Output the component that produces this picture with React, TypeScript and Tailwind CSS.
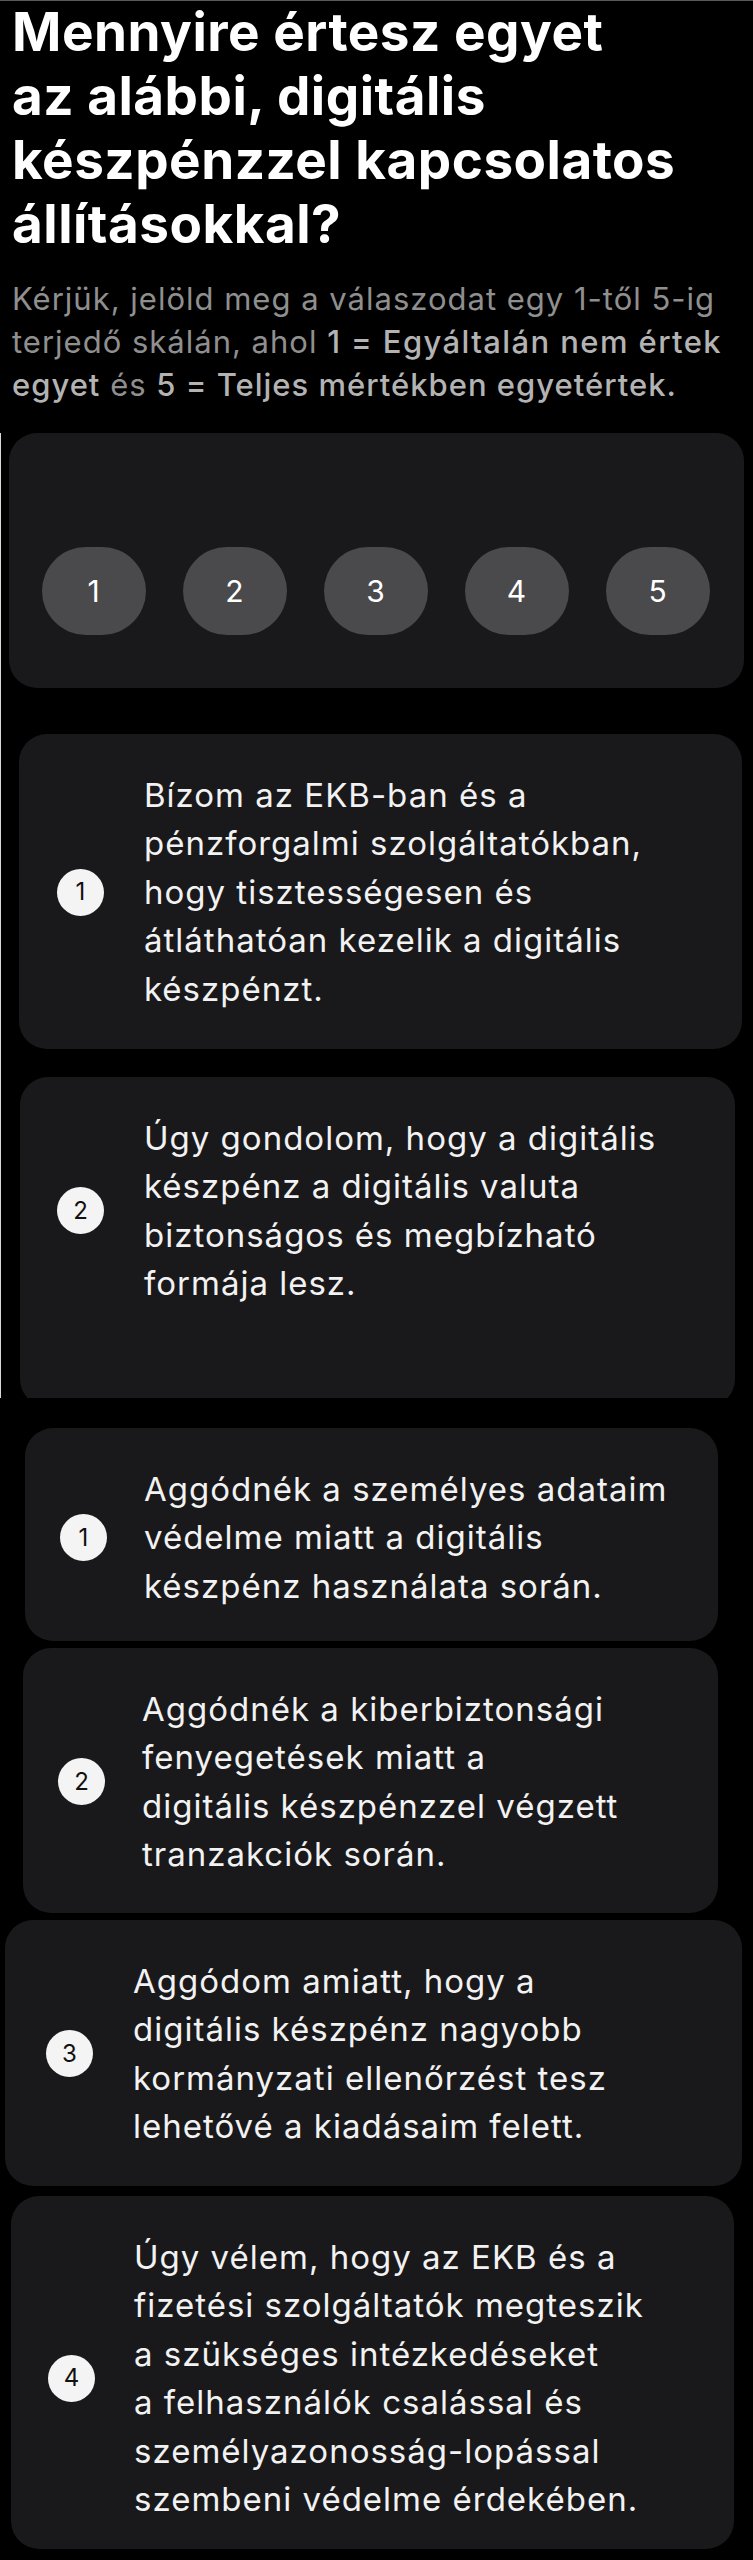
import React from "react";

type Statement = {
  n: number;
  lines: string[];
  card: string;
  badge: string;
};

const statements: Statement[] = [
  {
    n: 1,
    lines: [
      "Bízom az EKB-ban és a",
      "pénzforgalmi szolgáltatókban,",
      "hogy tisztességesen és",
      "átláthatóan kezelik a digitális",
      "készpénzt.",
    ],
    card: "mt-[46px] ml-[18px] w-[723px] h-[315px] pl-[38px]",
    badge: "mr-[40px]",
  },
  {
    n: 2,
    lines: [
      "Úgy gondolom, hogy a digitális",
      "készpénz a digitális valuta",
      "biztonságos és megbízható",
      "formája lesz.",
    ],
    card: "mt-[28px] ml-[19px] w-[715px] h-[330px] pl-[37px]",
    badge: "mr-[40px]",
  },
];

const statementsB: Statement[] = [
  {
    n: 1,
    lines: [
      "Aggódnék a személyes adataim",
      "védelme miatt a digitális",
      "készpénz használata során.",
    ],
    card: "mt-[30px] ml-[25px] w-[693px] h-[213px] pl-[35px]",
    badge: "mr-[37px]",
  },
  {
    n: 2,
    lines: [
      "Aggódnék a kiberbiztonsági",
      "fenyegetések miatt a",
      "digitális készpénzzel végzett",
      "tranzakciók során.",
    ],
    card: "mt-[7px] ml-[23px] w-[695px] h-[265px] pl-[35px]",
    badge: "mr-[37px]",
  },
  {
    n: 3,
    lines: [
      "Aggódom amiatt, hogy a",
      "digitális készpénz nagyobb",
      "kormányzati ellenőrzést tesz",
      "lehetővé a kiadásaim felett.",
    ],
    card: "mt-[7px] ml-[5px] w-[737px] h-[266px] pl-[41px]",
    badge: "mr-[40px]",
  },
  {
    n: 4,
    lines: [
      "Úgy vélem, hogy az EKB és a",
      "fizetési szolgáltatók megteszik",
      "a szükséges intézkedéseket",
      "a felhasználók csalással és",
      "személyazonosság-lopással",
      "szembeni védelme érdekében.",
    ],
    card: "mt-[10px] ml-[11px] w-[723px] h-[353px] pl-[37px]",
    badge: "mr-[39px]",
  },
];

function StatementCard({ s }: { s: Statement }) {
  return (
    <div className={`${s.card} shrink-0 rounded-[28px] bg-[#19191b] pt-[37px]`}>
      <div className="flex items-center">
        <div
          className={`${s.badge} flex h-[47px] w-[47px] shrink-0 items-center justify-center rounded-full bg-[#f4f4f4] text-[24px] text-[#111]`}
        >
          {s.n}
        </div>
        <p className="text-[33px] leading-[48.4px] tracking-[1px] text-[#f2f2f2]">
          {s.lines.map((line) => (
            <span key={line} className="block whitespace-nowrap">
              {line}
            </span>
          ))}
        </p>
      </div>
    </div>
  );
}

export default function App() {
  return (
    <div
      className="min-h-[2560px] w-[753px] border-t border-[#5a5a5a] bg-black"
      style={{ fontFamily: "Inter, 'Noto Sans', sans-serif" }}
    >
      <header className="px-3">
        <h1 className="-mt-[1px] text-[53px] font-bold leading-[64px] tracking-[0.5px] text-white">
          <span className="block whitespace-nowrap">Mennyire értesz egyet</span>
          <span className="block whitespace-nowrap">az alábbi, digitális</span>
          <span className="block whitespace-nowrap">készpénzzel kapcsolatos</span>
          <span className="block whitespace-nowrap">állításokkal?</span>
        </h1>
        <p className="mt-[21px] text-[31px] leading-[43px] tracking-[1px] text-[#8f8f8f]">
          <span className="block whitespace-nowrap">
            Kérjük, jelöld meg a válaszodat egy 1-től 5-ig
          </span>
          <span className="block whitespace-nowrap">
            terjedő skálán, ahol{" "}
            <span className="font-medium tracking-[1.4px] text-[#b3b3b3]">
              1 = Egyáltalán nem értek
            </span>
          </span>
          <span className="block whitespace-nowrap">
            <span className="font-medium text-[#b3b3b3]">egyet</span> és{" "}
            <span className="font-medium text-[#b3b3b3]">5 = Teljes mértékben egyetértek.</span>
          </span>
        </p>
      </header>

      <section className="mt-[27px] flex h-[965px] flex-col overflow-hidden border-l border-white/85">
        <div className="ml-2 h-[255px] w-[735px] shrink-0 rounded-[28px] bg-[#19191b] pt-[114px]">
          <div className="flex justify-center gap-[37px] pr-[2px]">
            {[1, 2, 3, 4, 5].map((n) => (
              <button
                key={n}
                type="button"
                className="flex h-[88px] w-[104px] items-center justify-center rounded-full bg-[#4a4a4c] text-[30px] text-white"
              >
                {n}
              </button>
            ))}
          </div>
        </div>
        {statements.map((s, i) => (
          <StatementCard key={i} s={s} />
        ))}
      </section>

      <section className="flex flex-col">
        {statementsB.map((s, i) => (
          <StatementCard key={i} s={s} />
        ))}
      </section>
    </div>
  );
}
